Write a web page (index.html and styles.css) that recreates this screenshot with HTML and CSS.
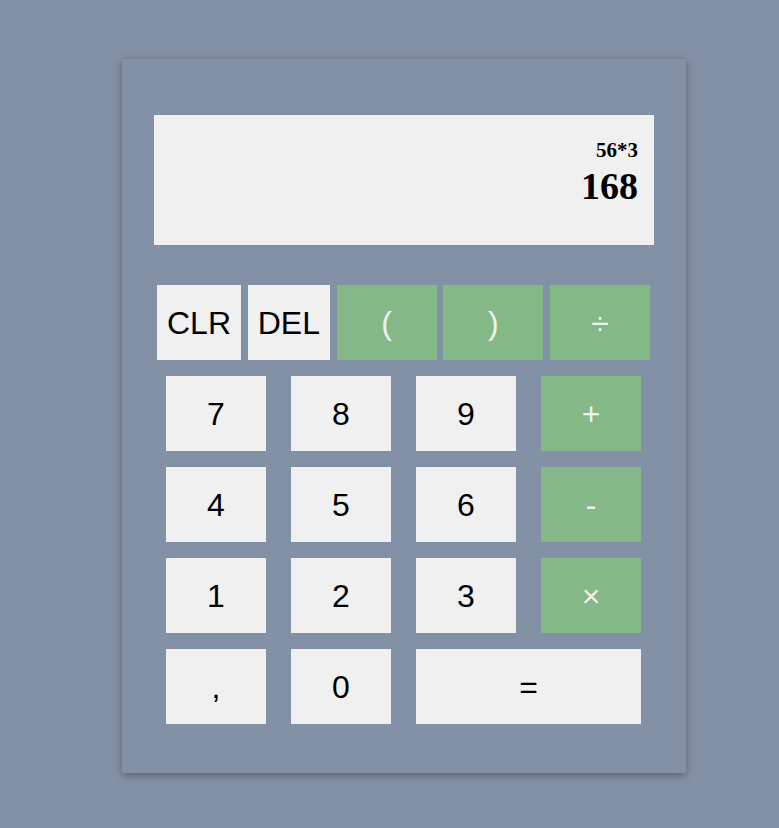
FILE: index.html
```html
<!DOCTYPE html>
<html lang="en">
<head>
<meta charset="utf-8">
<title>Calculator</title>
<link rel="stylesheet" href="styles.css">
</head>
<body>
<div class="calc">
  <div class="display">
    <div class="expr">56*3</div>
    <div class="result">168</div>
  </div>
  <div class="top-row">
    <button class="btn btn-fit">CLR</button>
    <button class="btn btn-fit">DEL</button>
    <button class="btn btn-op btn-wide">(</button>
    <button class="btn btn-op btn-wide">)</button>
    <button class="btn btn-op btn-wide">÷</button>
  </div>
  <div class="keys">
    <button class="btn">7</button>
    <button class="btn">8</button>
    <button class="btn">9</button>
    <button class="btn btn-op">+</button>
    <button class="btn">4</button>
    <button class="btn">5</button>
    <button class="btn">6</button>
    <button class="btn btn-op">-</button>
    <button class="btn">1</button>
    <button class="btn">2</button>
    <button class="btn">3</button>
    <button class="btn btn-op">×</button>
    <button class="btn">,</button>
    <button class="btn">0</button>
    <button class="btn btn-eq">=</button>
  </div>
</div>
</body>
</html>
```

FILE: styles.css
```css
html, body {
  margin: 0;
  padding: 0;
  background: #8391a7;
}

body {
  width: 779px;
  height: 828px;
  overflow: hidden;
}

.calc {
  box-sizing: border-box;
  width: 564px;
  height: 714px;
  margin: 59px 0 0 122px;
  padding: 56px 32px 49px 32px;
  background: #8391a7;
  box-shadow: 0 2px 8px rgba(0, 0, 0, 0.35);
}

.display {
  box-sizing: border-box;
  height: 130px;
  background: #f0f0f0;
  padding: 23px 16px 0 16px;
  text-align: right;
  font-family: "Liberation Serif", "Times New Roman", serif;
  font-weight: bold;
  color: #000;
}

.expr {
  font-size: 21px;
  line-height: 24px;
}

.result {
  font-size: 38px;
  line-height: 42px;
  margin-top: 3px;
}

.top-row {
  display: flex;
  justify-content: flex-start;
  gap: 6.7px;
  margin-top: 40px;
  padding-left: 3px;
}

.btn {
  box-sizing: border-box;
  height: 75px;
  border: none;
  margin: 0;
  padding: 0;
  background: #f0f0f0;
  color: #000;
  font-family: "Liberation Sans", Arial, sans-serif;
  font-size: 32px;
  line-height: 1;
  cursor: pointer;
}

.btn-fit {
  padding: 0 10px;
}

.btn-wide {
  width: 100px;
}

.btn-op {
  background: #84b886;
  color: #f0f0f0;
}

.keys {
  display: grid;
  grid-template-columns: repeat(4, 100px);
  grid-auto-rows: 75px;
  column-gap: 25px;
  row-gap: 16px;
  justify-content: start;
  margin-top: 16px;
  padding-left: 12px;
}

.btn-eq {
  grid-column: span 2;
}
```
